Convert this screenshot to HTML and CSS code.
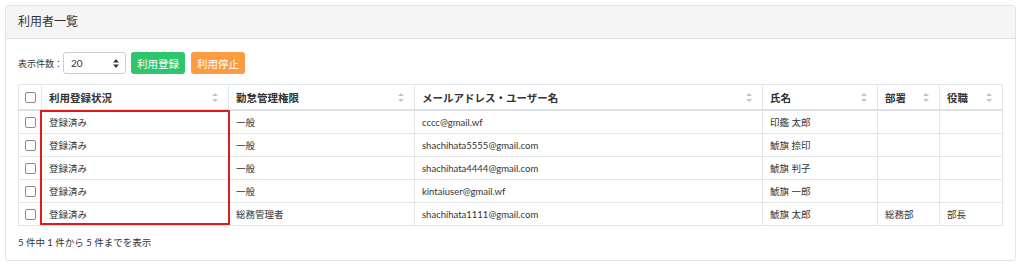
FILE: index.html
```html
<!DOCTYPE html>
<html lang="ja">
<head>
    <meta charset="UTF-8">
    <title>利用者一覧</title>
    <link rel="stylesheet" href="styles.css">
</head>
<body>

<div class="card">
    <div class="card-header">利用者一覧</div>
    <div class="card-body">
        <div class="controls">
            <label class="per-page">表示件数：</label>
            <div class="select">
                <span>20</span>
                <svg width="6" height="9" viewBox="0 0 6 9"><path d="M3 0L6 3.5H0Z M3 9L0 5.5H6Z" fill="#333"/></svg>
            </div>
            <button class="btn btn-green">利用登録</button>
            <button class="btn btn-orange">利用停止</button>
        </div>

        <div class="table-wrap">
            <table class="users">
                <colgroup>
                    <col style="width:23px">
                    <col style="width:187px">
                    <col style="width:186px">
                    <col style="width:348px">
                    <col style="width:115px">
                    <col style="width:62px">
                    <col style="width:63px">
                </colgroup>
                <thead>
                    <tr>
                        <th class="check"><span class="box"></span></th>
                        <th><div class="th-in">利用登録状況<i class="sort"></i></div></th>
                        <th><div class="th-in">勤怠管理権限<i class="sort"></i></div></th>
                        <th><div class="th-in">メールアドレス・ユーザー名<i class="sort"></i></div></th>
                        <th><div class="th-in">氏名<i class="sort"></i></div></th>
                        <th><div class="th-in">部署<i class="sort"></i></div></th>
                        <th><div class="th-in">役職<i class="sort"></i></div></th>
                    </tr>
                </thead>
                <tbody>
                    <tr>
                        <td class="check"><span class="box"></span></td>
                        <td>登録済み</td>
                        <td>一般</td>
                        <td>cccc@gmail.wf</td>
                        <td>印鑑 太郎</td>
                        <td></td>
                        <td></td>
                    </tr>
                    <tr>
                        <td class="check"><span class="box"></span></td>
                        <td>登録済み</td>
                        <td>一般</td>
                        <td>shachihata5555@gmail.com</td>
                        <td>鯱旗 捺印</td>
                        <td></td>
                        <td></td>
                    </tr>
                    <tr>
                        <td class="check"><span class="box"></span></td>
                        <td>登録済み</td>
                        <td>一般</td>
                        <td>shachihata4444@gmail.com</td>
                        <td>鯱旗 判子</td>
                        <td></td>
                        <td></td>
                    </tr>
                    <tr>
                        <td class="check"><span class="box"></span></td>
                        <td>登録済み</td>
                        <td>一般</td>
                        <td>kintaiuser@gmail.wf</td>
                        <td>鯱旗 一郎</td>
                        <td></td>
                        <td></td>
                    </tr>
                    <tr>
                        <td class="check"><span class="box"></span></td>
                        <td>登録済み</td>
                        <td>総務管理者</td>
                        <td>shachihata1111@gmail.com</td>
                        <td>鯱旗 太郎</td>
                        <td>総務部</td>
                        <td>部長</td>
                    </tr>
                </tbody>
            </table>
            <!-- 強調枠 -->
            <div class="highlight"></div>
        </div>

        <div class="info">5 件中 1 件から 5 件までを表示</div>
    </div>
</div>

</body>
</html>
```

FILE: styles.css
```css
body {
    margin: 0;
    padding: 5px;
    background-color: white;
    font-family: "Lato", "Noto Sans CJK JP", sans-serif;
    color: #333;
}

.card {
    width: 1009px;
    border: 1px solid #e3e3e3;
    border-radius: 3px;
}

.card-header {
    background-color: #f5f5f5;
    border-bottom: 1px solid #e3e3e3;
    height: 32px;
    line-height: 32px;
    padding-left: 12px;
    font-size: 12px;
}

.card-body {
    padding: 13px 12px 0 12px;
}

/* 操作ボタン */
.controls {
    display: flex;
    align-items: center;
    height: 22px;
}

.per-page {
    font-size: 9px;
    margin-right: 0;
}

.select {
    display: flex;
    align-items: center;
    justify-content: space-between;
    box-sizing: border-box;
    width: 63px;
    height: 22px;
    padding: 0 6px 0 7px;
    border: 1px solid #ccc;
    border-radius: 3px;
    font-size: 10px;
    margin-right: 5px;
}

.btn {
    height: 22px;
    padding: 0 6px;
    border: none;
    border-radius: 3px;
    color: white;
    font-family: inherit;
    font-size: 10.5px;
    margin-right: 6px;
}

.btn-green {
    background-color: #2dc66d;
}

.btn-orange {
    background-color: #fd9b42;
}

/* 一覧表 */
.table-wrap {
    position: relative;
    margin-top: 10px;
}

.users {
    width: 984px;
    border-collapse: collapse;
    table-layout: fixed;
}

.users th, .users td {
    border: 1px solid #e2e6ea;
    padding: 0 7px;
    text-align: left;
}

.users th {
    height: 24px;
    font-size: 10.5px;
    font-weight: bold;
    border-bottom: 2px solid #dde2e7;
}

.users td {
    height: 22px;
    font-size: 9.5px;
}

.users .check {
    padding: 0;
    text-align: center;
}

.box {
    display: inline-block;
    width: 9px;
    height: 9px;
    border: 1px solid #8a8a8a;
    border-radius: 2px;
    vertical-align: middle;
}

.th-in {
    display: flex;
    align-items: center;
    justify-content: space-between;
}

.sort {
    position: relative;
    width: 6px;
    height: 9px;
    margin-right: 3px;
}

.sort::before, .sort::after {
    content: "";
    position: absolute;
    left: 0;
    border-left: 3px solid transparent;
    border-right: 3px solid transparent;
}

.sort::before {
    top: 0;
    border-bottom: 3px solid #c4c4c4;
}

.sort::after {
    bottom: 0;
    border-top: 3px solid #c4c4c4;
}

.highlight {
    position: absolute;
    left: 22px;
    top: 26px;
    width: 186px;
    height: 111px;
    border: 2px solid #e01b1b;
}

.info {
    font-size: 9.5px;
    height: 34px;
    line-height: 33px;
}
```
